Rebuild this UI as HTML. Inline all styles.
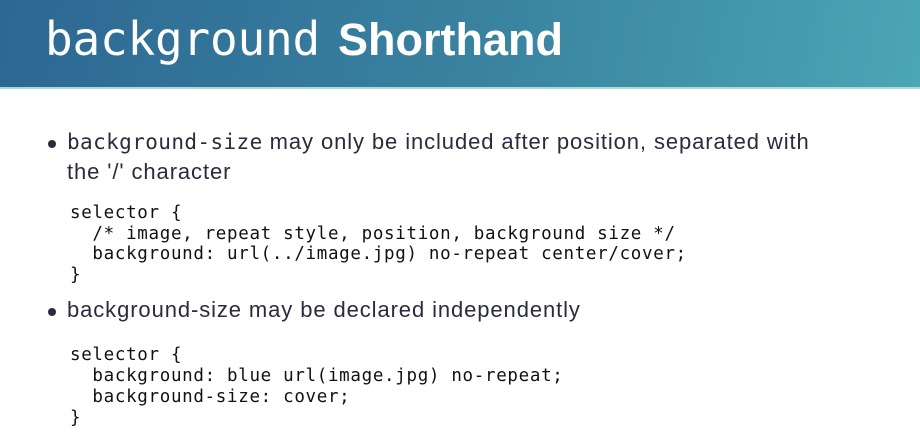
<!DOCTYPE html>
<html><head><style>
body{margin:0;width:920px;height:448px;background:#fff;position:relative;overflow:hidden;font-family:"Liberation Sans",sans-serif;}
.hdr{position:absolute;left:0;top:0;width:920px;height:87px;background:linear-gradient(100deg,#2d6793 0%,#3a84a0 55%,#4ba6b5 100%);border-bottom:2px solid #a8dcd8;}
.t1{position:absolute;left:45px;top:12px;font-family:"DejaVu Sans Mono",monospace;font-size:46px;color:#fff;letter-spacing:-0.2px;line-height:54px;}
.t2{position:absolute;left:338px;top:13px;font-size:45px;font-weight:bold;color:#fff;line-height:54px;}
.b{position:absolute;color:#2b2b40;font-size:22px;letter-spacing:0.9px;}
.dot{position:absolute;width:8px;height:8px;border-radius:50%;background:#2b2b40;}
.m{font-family:"DejaVu Sans Mono",monospace;font-size:21px;letter-spacing:0.4px;}
pre{position:absolute;margin:0;font-family:"DejaVu Sans Mono",monospace;font-size:17.5px;letter-spacing:0.68px;color:#111;}
</style></head><body>
<div class="hdr"><div class="t1">background</div><div class="t2">Shorthand</div></div>
<div class="dot" style="left:48px;top:140px"></div>
<div class="b" style="left:67px;top:129px"><span class="m">background-size</span> may only be included after position, separated with</div>
<div class="b" style="left:67px;top:159px">the '/' character</div>
<pre style="left:70px;top:203px;line-height:20.5px">selector {
  /* image, repeat style, position, background size */
  background: url(../image.jpg) no-repeat center/cover;
}</pre>
<div class="dot" style="left:48px;top:308px"></div>
<div class="b" style="left:67px;top:297px">background-size may be declared independently</div>
<pre style="left:70px;top:345px;line-height:21px">selector {
  background: blue url(image.jpg) no-repeat;
  background-size: cover;
}</pre>
</body></html>
